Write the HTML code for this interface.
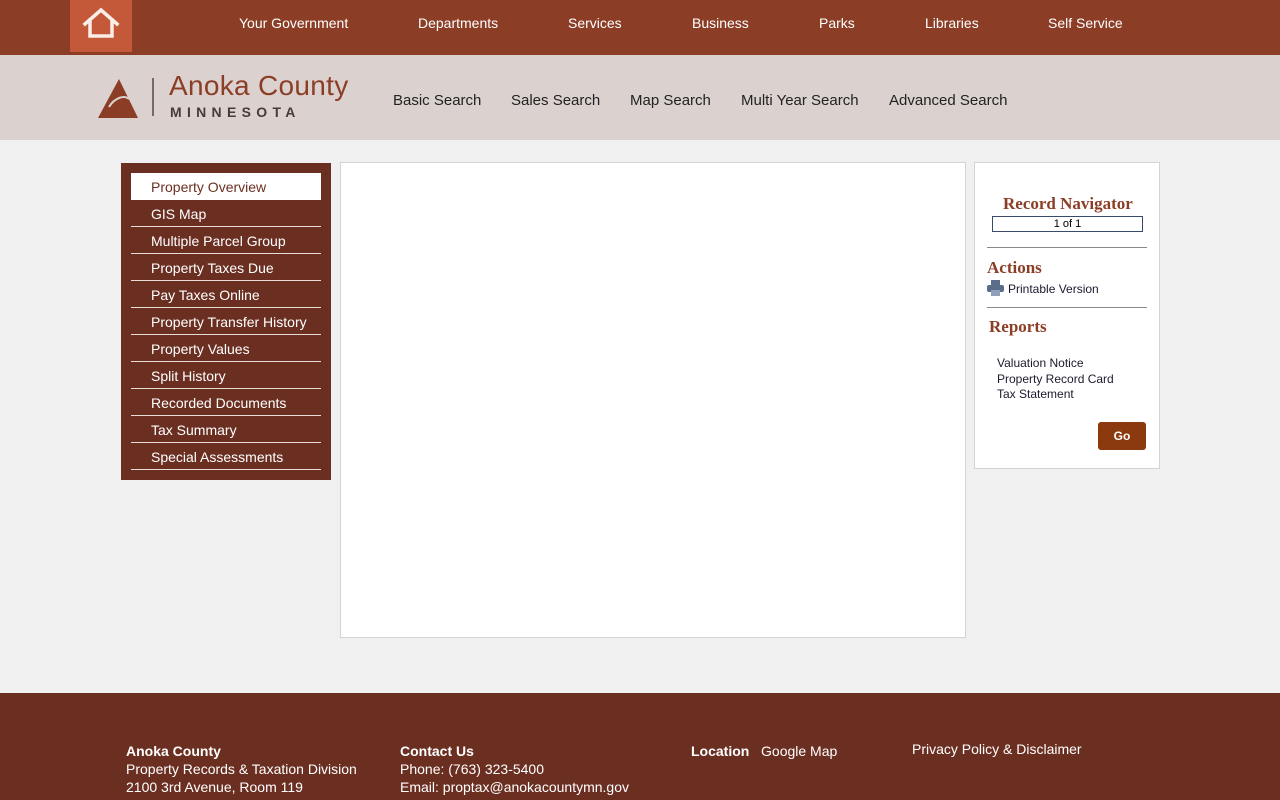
<!DOCTYPE html>
<html><head><style>
*{margin:0;padding:0;box-sizing:border-box}
body{width:1280px;height:800px;overflow:hidden;background:#f0f0f0;font-family:"Liberation Sans",Arial,sans-serif;position:relative}
.top{position:absolute;left:0;top:0;width:1280px;height:55px;background:#8c3d26}
.home{position:absolute;left:70px;top:0;width:62px;height:52px;background:#c4593a}
.top a{position:absolute;top:15px;color:#fff;font-size:14px;text-decoration:none}
.hdr{position:absolute;left:0;top:55px;width:1280px;height:85px;background:#dbd2cf}
.hdr a{position:absolute;top:37px;color:#222;font-size:15px;text-decoration:none}
.side{position:absolute;left:121px;top:163px;width:210px;height:317px;background:#6b2f22}
.side div{position:absolute;left:10px;width:190px;height:27px;color:#fff;font-size:14px;padding:6px 0 0 20px;border-bottom:1px solid #e8dcd8}
.side div.act{background:#fff;color:#6b2f22;border:none}
.main{position:absolute;left:340px;top:162px;width:626px;height:476px;background:#fff;border:1px solid #d4d4d4}
.rp{position:absolute;left:974px;top:162px;width:186px;height:307px;background:#fff;border:1px solid #d4d4d4}
.rp h3{position:absolute;color:#8c3d26;font-family:"Liberation Serif",serif;font-size:17px;font-weight:bold}
.rp .t{position:absolute;font-size:12px;color:#1a1a2e}
.foot{position:absolute;left:0;top:693px;width:1280px;height:107px;background:#6b2f22;color:#fff;font-size:14px}
.foot div{position:absolute;line-height:18px}
</style></head><body>
<div class="top">
<div class="home"><svg width="62" height="52" viewBox="0 0 62 52"><path d="M15 24 L31 10 L47 24 M20 20 V36 H42 V20" fill="none" stroke="#fbeee8" stroke-width="3.5" stroke-linejoin="miter" stroke-linecap="square"/></svg></div>
<a style="left:239px">Your Government</a><a style="left:418px">Departments</a><a style="left:568px">Services</a><a style="left:692px">Business</a><a style="left:819px">Parks</a><a style="left:925px">Libraries</a><a style="left:1048px">Self Service</a>
</div>
<div class="hdr">
<svg style="position:absolute;left:97px;top:22px" width="44" height="42" viewBox="0 0 44 42"><path d="M22 2 L41 41 H1 Z" fill="#8c3d26"/><path d="M12 30 C18 20 28 18 32 22" stroke="#dbd2cf" stroke-width="2" fill="none"/></svg>
<div style="position:absolute;left:152px;top:23px;width:2px;height:38px;background:#7a6a66"></div>
<div style="position:absolute;left:169px;top:15px;font-size:28px;color:#8c3d26;letter-spacing:0.3px">Anoka County</div>
<div style="position:absolute;left:170px;top:49px;font-size:14px;color:#4a3a36;font-weight:bold;letter-spacing:5.3px">MINNESOTA</div>
<a style="left:393px">Basic Search</a><a style="left:511px">Sales Search</a><a style="left:630px">Map Search</a><a style="left:741px">Multi Year Search</a><a style="left:889px">Advanced Search</a>
</div>
<div class="side">
<div class="act" style="top:10px">Property Overview</div>
<div style="top:37px">GIS Map</div><div style="top:64px">Multiple Parcel Group</div><div style="top:91px">Property Taxes Due</div><div style="top:118px">Pay Taxes Online</div><div style="top:145px">Property Transfer History</div><div style="top:172px">Property Values</div><div style="top:199px">Split History</div><div style="top:226px">Recorded Documents</div><div style="top:253px">Tax Summary</div><div style="top:280px">Special Assessments</div>
</div>
<div class="main"></div>
<div class="rp">
<h3 style="left:28px;top:31px">Record Navigator</h3>
<div style="position:absolute;left:17px;top:53px;width:151px;height:16px;border:1px solid #3a4a6a;font-size:11px;text-align:center;line-height:14px">1 of 1</div>
<div style="position:absolute;left:12px;top:84px;width:160px;height:1px;background:#888"></div>
<h3 style="left:12px;top:95px">Actions</h3>
<svg style="position:absolute;left:12px;top:117px" width="17" height="16" viewBox="0 0 17 16"><rect x="4" y="0" width="9" height="5" fill="#5a6e8a"/><rect x="0" y="5" width="17" height="7" rx="2" fill="#5a6e8a"/><rect x="4" y="10" width="9" height="6" fill="#8fa0b8"/></svg>
<div class="t" style="left:33px;top:119px">Printable Version</div>
<div style="position:absolute;left:12px;top:144px;width:160px;height:1px;background:#888"></div>
<h3 style="left:14px;top:154px">Reports</h3>
<div class="t" style="left:22px;top:193px;line-height:15.5px">Valuation Notice<br>Property Record Card<br>Tax Statement</div>
<div style="position:absolute;left:123px;top:259px;width:48px;height:28px;background:#8b3a0f;border-radius:3px;color:#fff;font-size:12px;font-weight:bold;text-align:center;line-height:28px">Go</div>
</div>
<div class="foot">
<div style="left:126px;top:49px"><b>Anoka County</b><br>Property Records &amp; Taxation Division<br>2100 3rd Avenue, Room 119</div>
<div style="left:400px;top:49px"><b>Contact Us</b><br>Phone: (763) 323-5400<br>Email: proptax@anokacountymn.gov</div>
<div style="left:691px;top:49px"><b>Location</b>&nbsp;&nbsp;&nbsp;Google Map</div>
<div style="left:912px;top:47px">Privacy Policy &amp; Disclaimer</div>
</div>
</body></html>
